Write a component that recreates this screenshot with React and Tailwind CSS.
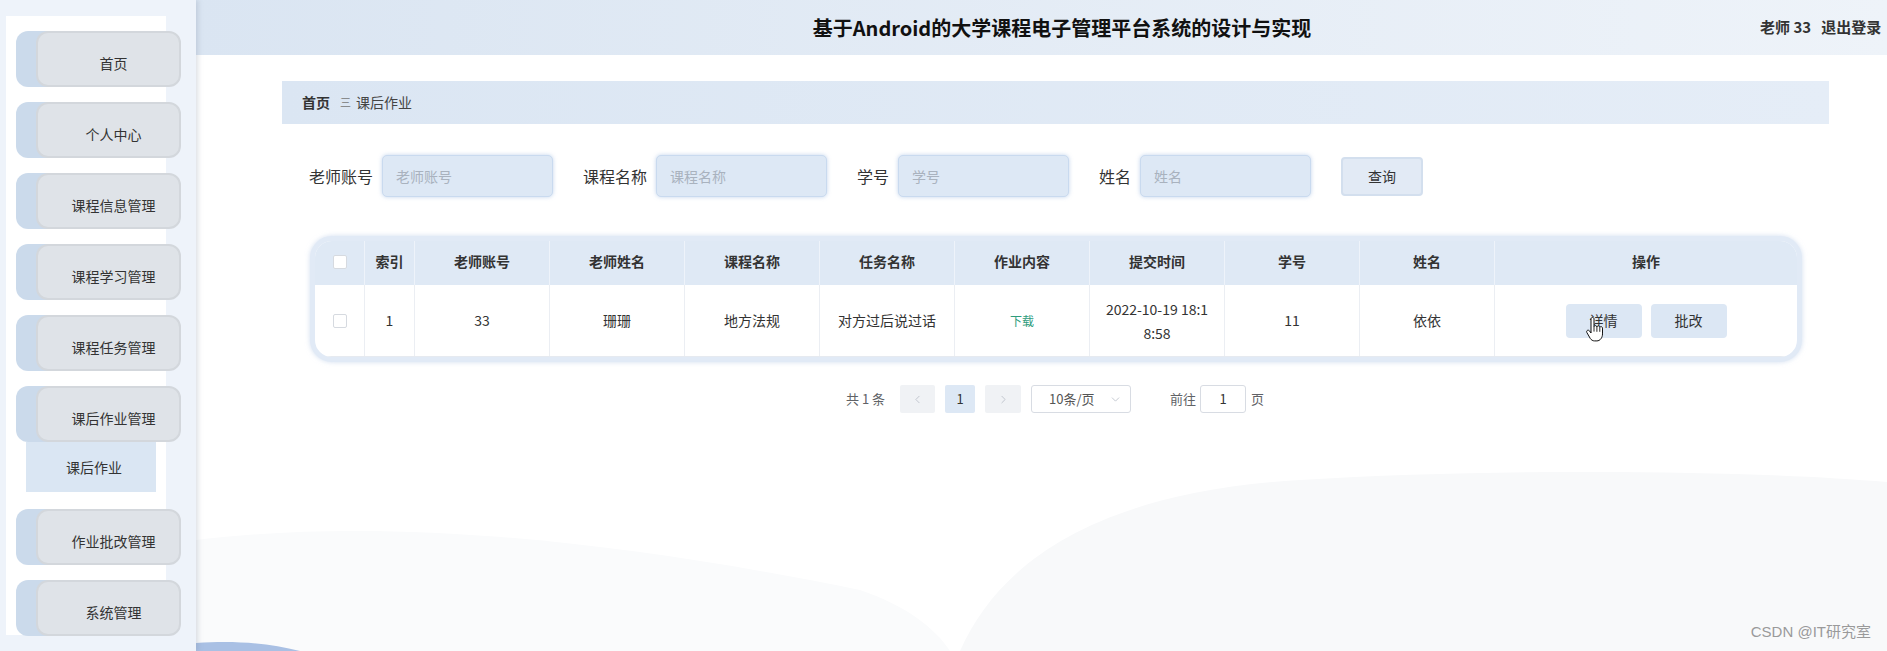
import React from "react";
import { ChevronLeft, ChevronRight, ChevronDown } from "lucide-react";

function MenuItem({ label, className = "" }) {
  return (
    <div
      className={`flex h-[56px] w-[165px] shrink-0 rounded-[12px] bg-[linear-gradient(to_right,#cbdaeb_0px,#cbdaeb_40px,transparent_40px)] ${className}`}
    >
      <div className="ml-[20px] flex h-full w-[145px] items-center justify-center rounded-[12px] border-2 border-[#d3d7dc] bg-[#dfe3e8] pl-[10px] pt-[8px] text-[14px] text-[#333]">
        {label}
      </div>
    </div>
  );
}

function Sidebar() {
  return (
    <aside className="relative z-10 h-[651px] w-[196px] shrink-0 bg-[#eef3fa] pl-[6px] pt-[16px] shadow-[2px_0_5px_rgba(120,130,150,0.25)]">
      <div className="flex h-[619px] w-[160px] flex-col bg-white pl-[10px] pt-[15px]">
        <MenuItem label="首页" className="mb-[15px]" />
        <MenuItem label="个人中心" className="mb-[15px]" />
        <MenuItem label="课程信息管理" className="mb-[15px]" />
        <MenuItem label="课程学习管理" className="mb-[15px]" />
        <MenuItem label="课程任务管理" className="mb-[15px]" />
        <MenuItem label="课后作业管理" />
        <div className="mb-[17px] ml-[10px] flex h-[50px] w-[130px] shrink-0 items-center justify-center bg-[#dae6f3] pl-[6px] text-[14px] text-[#333]">
          课后作业
        </div>
        <MenuItem label="作业批改管理" className="mb-[15px]" />
        <MenuItem label="系统管理" />
      </div>
    </aside>
  );
}

function Field({ label, w = "w-[64px]" }) {
  return (
    <div className="flex items-center">
      <span className={`${w} shrink-0 whitespace-nowrap text-[16px] text-[#333]`}>{label}</span>
      <input
        readOnly
        placeholder={label}
        className="ml-[9px] h-[42px] w-[171px] rounded-[5px] border border-[#c9daef] bg-[#dde8f5] pl-[13px] text-[14px] shadow-[0_0_4px_rgba(170,195,230,0.7)] outline-none placeholder:text-[#a9b2be]"
      />
    </div>
  );
}

function HandCursor() {
  return (
    <svg
      className="absolute left-[20px] top-[13px]"
      width="17"
      height="25"
      viewBox="0 0 17 25"
    >
      <path
        d="M5 2c0-.9.7-1.6 1.5-1.6S8 1.1 8 2v7.6c.2-.6.8-1 1.4-1 .8 0 1.4.6 1.5 1.3.2-.6.8-1 1.4-1 .8 0 1.5.6 1.5 1.4.2-.4.7-.7 1.2-.7.8 0 1.5.7 1.5 1.5v5.8c0 3.8-2.4 7-5.6 7H8.6c-1.9 0-3.3-.9-4.3-2.4L.9 15.6c-.5-.8-.3-1.8.5-2.2.7-.4 1.6-.2 2.1.5L5 16V2z"
        fill="#fff"
        stroke="#111"
        strokeWidth="1"
        strokeLinejoin="round"
      />
      <path d="M8 9.6v5M10.9 10v4.8M13.8 10.4v4.4" stroke="#111" strokeWidth="0.9" />
    </svg>
  );
}

const headers = ["索引", "老师账号", "老师姓名", "课程名称", "任务名称", "作业内容", "提交时间", "学号", "姓名", "操作"];

function Checkbox() {
  return <span className="block h-[14px] w-[14px] rounded-[2px] border border-[#d6dae0] bg-white" />;
}

function Table() {
  const cell = "flex items-center justify-center border-r border-[#ebeef3] text-[14px] text-[#333]";
  return (
    <div className="ml-[114px] mt-[39px] w-[1492px] overflow-hidden rounded-[22px] border-[5px] border-[#e1eaf6] bg-white shadow-[0_0_5px_rgba(180,200,230,0.6)]">
      <div className="grid h-[44px] grid-cols-[50px_50px_repeat(8,135px)_1fr] bg-[#dfe9f5]">
        <div className="flex items-center justify-center border-r border-[#eef3fa] pb-[3px]">
          <Checkbox />
        </div>
        {headers.map((h, i) => (
          <div
            key={h}
            className={`flex items-center justify-center pb-[3px] text-[14px] font-bold text-[#333] ${
              i < headers.length - 1 ? "border-r border-[#eef3fa]" : ""
            }`}
          >
            {h}
          </div>
        ))}
      </div>
      <div className="grid h-[72px] grid-cols-[50px_50px_repeat(8,135px)_1fr] border-b border-[#e6eaf0]">
        <div className={cell}>
          <Checkbox />
        </div>
        <div className={cell}>1</div>
        <div className={cell}>33</div>
        <div className={cell}>珊珊</div>
        <div className={cell}>地方法规</div>
        <div className={cell}>对方过后说过话</div>
        <div className={cell}>
          <span className="text-[12px] text-[#2f9c7d]">下载</span>
        </div>
        <div className={`${cell} text-center leading-[24px]`}>
          <span>
            2022-10-19 18:1
            <br />
            8:58
          </span>
        </div>
        <div className={cell}>11</div>
        <div className={cell}>依依</div>
        <div className="flex items-center justify-center gap-[9px]">
          <button className="relative h-[34px] w-[76px] rounded-[4px] bg-[#dce7f4] text-[14px] text-[#333]">
            详情
            <HandCursor />
          </button>
          <button className="h-[34px] w-[76px] rounded-[4px] bg-[#dce7f4] text-[14px] text-[#333]">批改</button>
        </div>
      </div>
    </div>
  );
}

function Pagination() {
  return (
    <div className="ml-[650px] mt-[23px] flex h-[28px] items-center text-[13px] text-[#606266]">
      <span className="whitespace-nowrap">共 1 条</span>
      <span className="ml-[15px] flex h-[28px] w-[35px] items-center justify-center rounded-[2px] bg-[#f0f2f5]">
        <ChevronLeft size={13} strokeWidth={1.5} color="#b8bdc6" />
      </span>
      <span className="ml-[10px] flex h-[28px] w-[30px] items-center justify-center rounded-[2px] bg-[#dde8f5] text-[#333]">
        1
      </span>
      <span className="ml-[10px] flex h-[28px] w-[36px] items-center justify-center rounded-[2px] bg-[#f0f2f5]">
        <ChevronRight size={13} strokeWidth={1.5} color="#b8bdc6" />
      </span>
      <span className="ml-[10px] flex h-[28px] w-[100px] items-center rounded-[3px] border border-[#d8dce3] pl-[17px] pr-[8px] text-[#555]">
        <span className="flex-1">10条/页</span>
        <ChevronDown size={13} strokeWidth={1.5} color="#b8bdc6" />
      </span>
      <span className="ml-[39px] whitespace-nowrap">前往</span>
      <span className="ml-[4px] flex h-[28px] w-[46px] items-center justify-center rounded-[3px] border border-[#d8dce3] text-[#333]">
        1
      </span>
      <span className="ml-[5px]">页</span>
    </div>
  );
}

function Main() {
  return (
    <main className="relative flex h-[651px] flex-1 flex-col bg-white">
      <svg
        className="absolute inset-0 h-full w-full"
        viewBox="196 0 1691 651"
        preserveAspectRatio="none"
      >
        <path
          d="M196 540 C 400 515, 640 545, 860 590 C 905 605, 935 628, 950 651 L 196 651 Z"
          fill="#fafbfc"
        />
        <path
          d="M960 651 C 1000 560, 1100 492, 1300 480 C 1500 468, 1750 470, 1887 482 L 1887 651 Z"
          fill="#f8f9fa"
        />
        <path d="M196 643 C 240 640, 270 644, 300 651 L 196 651 Z" fill="#a9c0e4" />
      </svg>

      <header className="relative flex h-[55px] shrink-0 items-center bg-[linear-gradient(to_right,#dae5f2,#eef3f9)]">
        <div className="flex flex-1 justify-center pl-[168px]">
          <h1 className="whitespace-nowrap text-[20px] font-bold text-[#111]">
            基于Android的大学课程电子管理平台系统的设计与实现
          </h1>
        </div>
        <div className="w-[127px] shrink-0 overflow-hidden whitespace-nowrap text-[15px] font-bold text-[#333]">
          老师 33&nbsp;&nbsp;&nbsp;退出登录
        </div>
      </header>

      <div className="relative flex flex-col">
        <div className="ml-[86px] mt-[26px] flex h-[43px] w-[1547px] items-center bg-[linear-gradient(to_right,#dbe6f3,#e5edf7)] pl-[20px] text-[14px]">
          <span className="font-bold text-[#333]">首页</span>
          <span className="ml-[10px] text-[11px] text-[#777]">三</span>
          <span className="ml-[5px] text-[#444]">课后作业</span>
        </div>

        <div className="ml-[113px] mt-[31px] flex h-[42px] items-center gap-[30px]">
          <Field label="老师账号" />
          <Field label="课程名称" />
          <Field label="学号" w="w-[32px]" />
          <Field label="姓名" w="w-[32px]" />
          <button className="h-[39px] w-[82px] rounded-[4px] border-2 border-[#d3dfee] bg-[#e2eaf5] text-[14px] text-[#333]">
            查询
          </button>
        </div>

        <Table />
        <Pagination />
      </div>

      <div className="absolute bottom-[8px] right-[16px] whitespace-nowrap font-['Liberation_Sans','Noto_Sans_CJK_SC',sans-serif] text-[15px] text-[#9a9a9a]">
        CSDN @IT研究室
      </div>
    </main>
  );
}

export default function App() {
  return (
    <div className="flex h-[651px] w-[1887px] overflow-hidden bg-white font-['Noto_Sans_CJK_SC','Noto_Sans',sans-serif] text-[#333]">
      <Sidebar />
      <Main />
    </div>
  );
}
